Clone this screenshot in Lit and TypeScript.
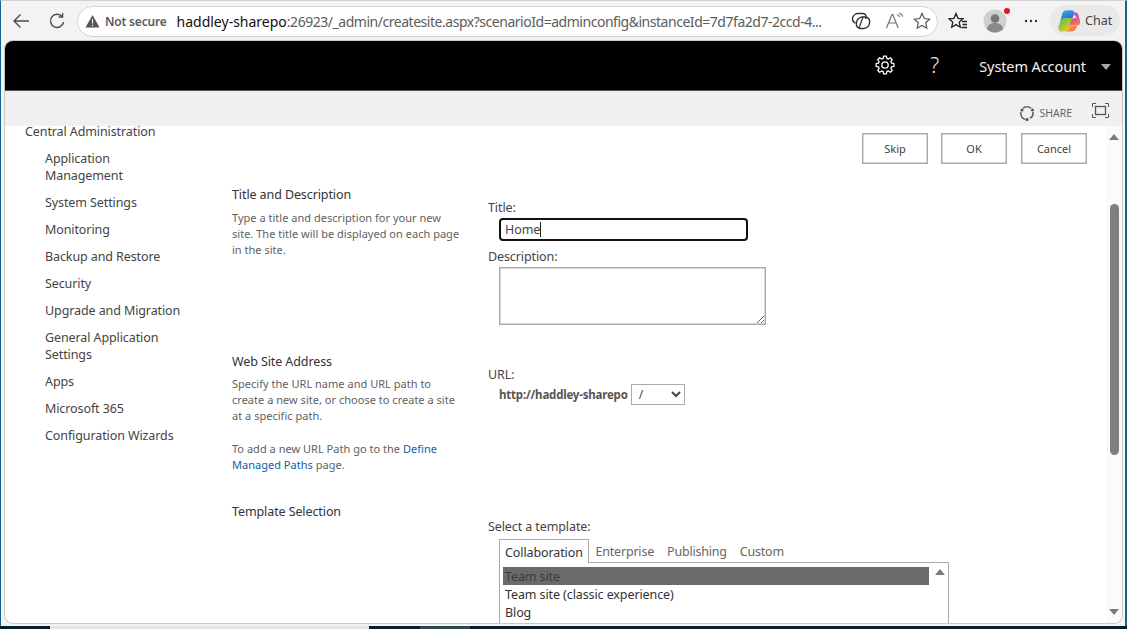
import { LitElement, html, css, svg } from "lit";
import { customElement } from "lit/decorators.js";

const FONT = css`"Noto Sans", "Open Sans", "Liberation Sans", sans-serif`;

function gearPath(cx: number, cy: number, rIn: number, rOut: number, teeth: number) {
  const pts: string[] = [];
  const step = (Math.PI * 2) / teeth;
  for (let i = 0; i < teeth; i++) {
    const a = i * step - Math.PI / 2;
    const w = step * 0.2;
    const spots: [number, number][] = [
      [a - step * 0.34, rIn],
      [a - w, rOut],
      [a + w, rOut],
      [a + step * 0.34, rIn],
    ];
    for (const [ang, r] of spots) {
      pts.push(`${(cx + r * Math.cos(ang)).toFixed(2)} ${(cy + r * Math.sin(ang)).toFixed(2)}`);
    }
  }
  return `M${pts.join("L")}Z`;
}

@customElement("browser-bar")
class BrowserBar extends LitElement {
  static styles = css`
    :host { display: flex; align-items: center; height: 41px; padding: 0 0 0 11px; box-sizing: border-box; font-family: ${FONT}; }
    svg { display: block; flex: none; }
    .back { margin-right: 18px; }
    .reload { margin-right: 12px; }
    .addr { width: 861px; height: 31px; box-sizing: border-box; margin-top: 1px; border: 1px solid #d4d4d4; border-radius: 16px; background: #fff; display: flex; align-items: center; padding: 0 6px 0 7px; flex: none; }
    .warn { margin-right: 5px; }
    .secure { font-size: 12px; font-weight: 600; color: #5a5a5a; margin-right: 10px; white-space: nowrap; letter-spacing: -0.2px; }
    .url { font-size: 14px; color: #5c5c5c; white-space: nowrap; width: 650px; letter-spacing: -0.47px; flex: none; }
    .url b { font-weight: 400; color: #111; letter-spacing: 0; }
    .addr-icons { display: flex; align-items: center; margin-left: 24px; }
    .i-tabs { margin-right: 14px; }
    .i-read { margin-right: 8px; }
    .fav { margin-left: 10px; }
    .avatar { position: relative; margin-left: 15px; width: 24px; height: 24px; flex: none; }
    .dot { position: absolute; top: -1px; right: -3px; width: 6px; height: 6px; border-radius: 50%; background: #e0161f; }
    .more { margin-left: 17px; }
    .chat { margin-left: 12px; width: 70px; height: 31px; border-radius: 16px; background: #e9e9e9; display: flex; align-items: center; gap: 4px; padding-left: 7px; box-sizing: border-box; font-size: 12.5px; color: #444; flex: none; }
  `;
  render() {
    return html`
      <svg class="back" width="20" height="20" viewBox="0 0 20 20" fill="none" stroke="#4a4a4a" stroke-width="1.4"><path d="M18 10H3M9.5 3.5 3 10l6.500 6.500"/></svg>
      <svg class="reload" width="16" height="18" viewBox="0 0 16 18" fill="none" stroke="#4a4a4a" stroke-width="1.4"><path d="M13.200 4.600A6.600 6.600 0 1 0 14.600 10"/><path d="M13.600 1v4h-4" /></svg>
      <div class="addr">
        <svg class="warn" width="15" height="14" viewBox="0 0 15 14"><path d="M7.500 1 14.500 13.500H.5Z" fill="#555"/><path d="M7.500 5v4.500M7.500 10.700v1.300" stroke="#fff" stroke-width="1.200"/></svg>
        <span class="secure">Not secure</span>
        <span class="url"><b>haddley-sharepo</b>:26923/_admin/createsite.aspx?scenarioId=adminconfig&amp;instanceId=7d7fa2d7-2ccd-4...</span>
        <div class="addr-icons">
          <svg class="i-tabs" width="20" height="18" viewBox="0 0 20 18" fill="none" stroke="#333" stroke-width="1.400"><path d="M7 1.500h5a3 3 0 0 1 3 3.500l-.4 2"/><path d="M7 1.500C4 1.500 1.500 4 1.500 7c0 2 1 3.500 3 4"/><rect x="5" y="5" width="13" height="11.500" rx="5" transform="skewX(-8) translate(2 0)"/><path d="M8 16 12 5" stroke-width="1.200"/></svg>
          <svg class="i-read" width="20" height="18" viewBox="0 0 20 18" fill="none" stroke="#707070" stroke-width="1.200"><path d="M1.500 16 7 2.500h.8L13.200 16M3.600 11h7.600"/><path d="M12 2.500c1.400.3 2.200 1.200 2.600 2.600M14.200 1c1.800.5 3 1.800 3.400 3.600"/></svg>
          <svg width="18" height="18" viewBox="0 0 18 18" fill="none" stroke="#555" stroke-width="1.200"><path d="M9 1.400 11.300 6.500l5.400.6-4 3.700 1.100 5.400L9 13.500l-4.800 2.700 1.100-5.400-4-3.700 5.400-.6Z"/></svg>
        </div>
      </div>
      <svg class="fav" width="20" height="18" viewBox="0 0 20 18" fill="none" stroke="#222" stroke-width="1.300"><path d="M8 1.500 10 6.300l5 .5-3.800 3.400 1.100 5-4.300-2.600-4.300 2.600 1.100-5L1 6.800l5-.5Z"/><path d="M14 9.500h5M14.500 12.500h4.500M13.500 15.500h5.500"/></svg>
      <div class="avatar">
        <svg width="24" height="24" viewBox="0 0 24 24"><circle cx="12" cy="12" r="11.500" fill="#cfcfcf"/><circle cx="12" cy="9.500" r="4.300" fill="#777"/><path d="M3.800 20c1-4.500 4.300-6 8.200-6s7.200 1.500 8.200 6a11.500 11.500 0 0 1-16.400 0Z" fill="#8a8a8a"/></svg>
        <span class="dot"></span>
      </div>
      <svg class="more" width="14" height="4" viewBox="0 0 14 4" fill="#333"><circle cx="2" cy="2" r="1.200"/><circle cx="7" cy="2" r="1.200"/><circle cx="12" cy="2" r="1.200"/></svg>
      <div class="chat">
        <svg width="24" height="24" viewBox="0 0 24 24">
          <defs>
            <linearGradient id="ca" x1="0.300" y1="0" x2="0.700" y2="1"><stop offset="0" stop-color="#27b6ea"/><stop offset=".45" stop-color="#3a7be0"/><stop offset="1" stop-color="#2f55c8"/></linearGradient>
            <linearGradient id="cb" x1="0.300" y1="0" x2="0.700" y2="1"><stop offset="0" stop-color="#8a55e0"/><stop offset=".5" stop-color="#e6548f"/><stop offset="1" stop-color="#f2793e"/></linearGradient>
            <linearGradient id="cc" x1="0" y1="0" x2="0.600" y2="1"><stop offset="0" stop-color="#31bd8a"/><stop offset=".6" stop-color="#8ac93f"/><stop offset="1" stop-color="#f5c331"/></linearGradient>
            <linearGradient id="cd" x1="0" y1="0" x2="1" y2="1"><stop offset="0" stop-color="#f6a63a"/><stop offset="1" stop-color="#f06a4e"/></linearGradient>
          </defs>
          <path d="M9 1.500h6c1.300 0 2 .8 2.300 2L13 17c-.8 3-2.500 5.500-5 5.500H4.800c-2.500 0-4-2-3.300-4.500L5 6c.8-2.800 2-4.500 4-4.500Z" fill="url(#cc)"/>
          <path d="M9 1.500h6c1.300 0 2 .8 2.300 2L15.500 9H8c-2 0-3.300 1.200-4 3L5 6c.8-2.800 2-4.500 4-4.500Z" fill="url(#ca)"/>
          <path d="M17.300 3.500c.5 0 1 0 1.300 0 1.500 0 2.400 1 3 3l1.300 5c.7 3-.5 5-3 5h-7.700l1.800-5c.6-1.600 1.900-2.500 3.500-2.500h2.200L17 5Z" fill="url(#cb)"/>
          <path d="M13 17h7c-.6 3.300-3 5.500-6 5.500H8c2.500 0 4.200-2.500 5-5.500Z" fill="url(#cd)"/>
        </svg>
        <span>Chat</span>
      </div>
    `;
  }
}

@customElement("nav-tree")
class NavTree extends LitElement {
  static styles = css`
    :host { display: block; width: 227px; flex: none; box-sizing: border-box; padding: 0 20px; font-family: ${FONT}; font-size: 12.5px; letter-spacing: -0.1px; line-height: 17px; color: #444; }
    .root { line-height: 11px; margin-bottom: 13px; white-space: nowrap; }
    ul { list-style: none; margin: 0; padding: 0 0 0 20px; display: flex; flex-direction: column; gap: 10px; width: 140px; }
  `;
  items = ["Application Management", "System Settings", "Monitoring", "Backup and Restore", "Security", "Upgrade and Migration", "General Application Settings", "Apps", "Microsoft 365", "Configuration Wizards"];
  render() {
    return html`<div class="root">Central Administration</div><ul>${this.items.map((i) => html`<li>${i}</li>`)}</ul>`;
  }
}

@customElement("app-root")
class AppRoot extends LitElement {
  static styles = css`
    :host { display: block; width: 1127px; height: 629px; overflow: hidden; font-family: ${FONT}; }
    .app { width: 1127px; height: 629px; box-sizing: border-box; display: flex; flex-direction: column; background: #f3f3f3; border-left: 1px solid #17618f; border-right: 2px solid #1c5f8c; border-top: 1px solid #d2d2d2; position: relative; }
    browser-bar { margin-top: -1px; margin-left: -1px; }
    .window { flex: none; height: 582px; margin: 0 3px 0 4px; display: flex; flex-direction: column; border-radius: 8px; overflow: hidden; background: #fff; box-shadow: 0 0 0 1px #c8c8c8; }
    .suite { height: 49px; flex: none; background: #000; color: #fff; display: flex; align-items: center; justify-content: flex-end; border-bottom: 1px solid #555; }
    .gear { margin-right: 35px; margin-bottom: 2px; }
    .help { font-size: 21px; font-weight: 300; width: 12px; margin-right: 37px; color: #eee; line-height: 1; margin-bottom: 1px; }
    .acct { font-size: 14.5px; letter-spacing: -0.1px; margin-right: 15px; color: #f2f2f2; margin-top: 1px; }
    .caret { width: 0; height: 0; border: 5.5px solid transparent; border-top: 6px solid #a8a8a8; border-bottom: 0; margin-right: 11px; margin-top: 2px; }
    .ribbon { height: 35px; flex: none; box-sizing: border-box; padding: 8px 13px 0 0; background: #f0f0f0; display: flex; align-items: center; justify-content: flex-end; font-size: 10.5px; color: #666; }
    .share { margin-right: 4px; }
    .focus { margin-left: 20px; margin-bottom: 4px; }
    .content { flex: 1; min-height: 0; display: flex; }
    .main { flex: 1; min-width: 0; display: flex; }
    .body { flex: 1; min-width: 0; color: #444; font-size: 12.5px; letter-spacing: -0.1px; line-height: 17px; }
    .actions { display: flex; justify-content: flex-end; gap: 13px; padding: 7px 19px 0 0; margin-bottom: 22px; }
    button { width: 66px; height: 31px; box-sizing: border-box; background: #fff; border: 1px solid #ababab; box-shadow: inset 0 0 0 .5px #ababab; font: 11px ${FONT}; color: #444; padding: 0; }
    button.ok { margin-right: 1px; }
    .sec { display: grid; grid-template-columns: 256px 1fr; }
    .s1 { height: 167px; } .s2 { height: 150px; }
    h3 { margin: 0; font-size: 12.5px; font-weight: 400; color: #333; line-height: 17px; }
    .info { font-size: 11px; letter-spacing: 0.02px; line-height: 16px; color: #5f5f5f; margin: 7px 0 0 0; }
    .s2 .info { margin-top: 6px; }
    .s2 .info + .info { margin-top: 17px; }
    a { color: #0f5ea8; text-decoration: none; }
    .field { padding-top: 13px; }
    .label { display: block; }
    .inset { margin-left: 11px; }
    .ti { width: 249px; height: 23px; box-sizing: border-box; border: 2px solid #111; border-radius: 4px; margin-top: 2px; margin-bottom: 7px; padding: 0 4px; display: flex; align-items: center; color: #444; }
    .cursor { display: inline-block; width: 1px; height: 15px; background: #222; }
    textarea { display: block; width: 267px; height: 58px; box-sizing: border-box; border: 1px solid #ababab; box-shadow: inset 0 0 0 .5px #ababab; margin-top: 2px; padding: 0; outline: 0; background: #fff; font: inherit; }
    .urlrow { display: flex; align-items: center; font-size: 11.5px; font-weight: 700; color: #555; height: 21px; margin-top: 1px; letter-spacing: -0.2px; gap: 3px; }
    select { width: 54px; height: 21px; box-sizing: border-box; border: 1px solid #ababab; background: #fff; font: 12px ${FONT}; color: #444; padding: 0 0 0 3px; }
    .s3 .field { padding-top: 15px; }
    .tabs { display: flex; margin-top: 4px; height: 23px; position: relative; z-index: 1; color: #666; letter-spacing: -0.2px; }
    .tab { padding: 0 6.5px; line-height: 26px; height: 24px; box-sizing: border-box; }
    .tab.on { width: 90px; padding: 0 5px; color: #333; background: #fff; border: 1px solid #ababab; border-bottom: 0; line-height: 25px; letter-spacing: -0.1px; white-space: nowrap; }
    .panel { width: 450px; height: 61px; box-sizing: border-box; border: 1px solid #ababab; border-bottom: 0; padding: 4px 3px 0; display: flex; color: #333; }
    .items { width: 426px; flex: none; }
    .items div { padding: 2px 0 0 2px; line-height: 16px; white-space: nowrap; }
    .items .sel { background: #6a6a6a; color: #3c3c3c; }
    .pscroll { flex: 1; display: flex; justify-content: center; padding: 2px 0 0 5px; }
    .up { width: 0; height: 0; border: 5px solid transparent; border-bottom: 6px solid #7a7a7a; border-top: 0; }
    .down { width: 0; height: 0; border: 5px solid transparent; border-top: 6px solid #7a7a7a; border-bottom: 0; }
    .sb { width: 16px; flex: none; background: #fbfbfb; display: flex; flex-direction: column; align-items: center; padding: 8px 0 8px; box-sizing: border-box; }
    .thumb { width: 9px; height: 251px; border-radius: 4.5px; background: #7f7f7f; margin-top: 64px; }
    .sp { flex: 1; }
    .task { position: absolute; left: -1px; right: -2px; bottom: 0; height: 3px; background: #051d28; display: flex; }
    .t-light { display: block; margin-left: 50px; width: 319px; background: #e6e6e6; }
    .t-mid { display: block; margin-left: 51px; width: 50px; background: #2c4a4a; }
  `;
  render() {
    return html`
      <div class="app">
        <browser-bar></browser-bar>
        <div class="window">
          <div class="suite">
            <svg class="gear" width="20" height="20" viewBox="0 0 20 20" fill="none" stroke="#fff" stroke-width="1.300" stroke-linejoin="round">${svg`<path d="${gearPath(10, 10, 6.8, 9, 8)}"/><circle cx="10" cy="10" r="3.200"/>`}</svg>
            <span class="help">?</span>
            <span class="acct">System Account</span>
            <span class="caret"></span>
          </div>
          <div class="ribbon">
            <svg class="share" width="16" height="16" viewBox="0 0 16 16" fill="none" stroke="#555" stroke-width="1.500"><path d="M4 3.200A6 6 0 0 1 12 3.200M14 7a6 6 0 0 1-3 6.200M6 14.400A6 6 0 0 1 2 7"/><circle cx="3" cy="5" r="1.600" fill="#555" stroke="none"/><circle cx="13.500" cy="5" r="1.600" fill="#555" stroke="none"/><circle cx="8" cy="14.500" r="1.600" fill="#555" stroke="none"/></svg>
            <span>SHARE</span>
            <svg class="focus" width="17" height="15" viewBox="0 0 17 15" fill="none" stroke="#555" stroke-width="1"><path d="M.5 4V.5H4M13 .5h3.500V4M16.500 11v3.500H13M4 14.500H.5V11"/><rect x="3.500" y="3.500" width="10" height="8" stroke-width="1.300"/></svg>
          </div>
          <div class="content">
            <div class="main">
              <nav-tree></nav-tree>
              <div class="body">
                <div class="actions"><button>Skip</button><button class="ok">OK</button><button>Cancel</button></div>
                <section class="sec s1">
                  <div>
                    <h3>Title and Description</h3>
                    <p class="info">Type a title and description for your new<br>site. The title will be displayed on each page<br>in the site.</p>
                  </div>
                  <div class="field">
                    <span class="label">Title:</span>
                    <div class="inset ti"><span>Home</span><span class="cursor"></span></div>
                    <span class="label">Description:</span>
                    <textarea class="inset"></textarea>
                  </div>
                </section>
                <section class="sec s2">
                  <div>
                    <h3>Web Site Address</h3>
                    <p class="info">Specify the URL name and URL path to<br>create a new site, or choose to create a site<br>at a specific path.</p>
                    <p class="info">To add a new URL Path go to the <a>Define<br>Managed Paths</a> page.</p>
                  </div>
                  <div class="field">
                    <span class="label">URL:</span>
                    <div class="inset urlrow"><span>http://haddley-sharepo</span><select><option>/</option></select></div>
                  </div>
                </section>
                <section class="sec s3">
                  <div><h3>Template Selection</h3></div>
                  <div class="field">
                    <span class="label">Select a template:</span>
                    <div class="inset">
                      <div class="tabs"><div class="tab on">Collaboration</div><div class="tab">Enterprise</div><div class="tab">Publishing</div><div class="tab">Custom</div></div>
                      <div class="panel">
                        <div class="items"><div class="sel">Team site</div><div>Team site (classic experience)</div><div>Blog</div></div>
                        <div class="pscroll"><span class="up"></span></div>
                      </div>
                    </div>
                  </div>
                </section>
              </div>
            </div>
            <div class="sb"><span class="up"></span><span class="thumb"></span><span class="sp"></span><span class="down"></span></div>
          </div>
        </div>
        <div class="task"><i class="t-light"></i><i class="t-mid"></i></div>
      </div>
    `;
  }
}
